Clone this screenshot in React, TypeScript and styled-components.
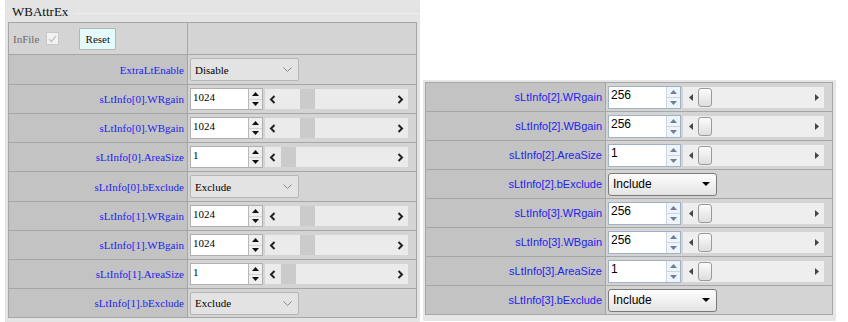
import styled, { createGlobalStyle } from 'styled-components'

const Global = createGlobalStyle`
  body {
    margin: 0;
    background: #ffffff;
  }
`

const Page = styled.div`
  display: flex;
  align-items: flex-start;
  width: 848px;
  height: 322px;
  overflow: hidden;
`

const LeftPanel = styled.div`
  margin-left: 5px;
  width: 415px;
  height: 322px;
  background: #e4e4e4;
  padding: 2px 0 0 3px;
  box-sizing: border-box;
`

const Title = styled.div`
  font-family: "Liberation Serif", serif;
  font-size: 13px;
  color: #111;
  height: 20px;
  line-height: 16px;
  padding-left: 4px;
  display: flex;
  align-items: center;
  gap: 6px;

  &::after {
    content: '';
    flex: 1;
    height: 1px;
    background: #eeeeee;
    margin-top: 2px;
  }
`

const Table = styled.div<{ $serif?: boolean; $width: number }>`
  width: ${p => p.$width}px;
  border: 1px solid #a6a6a6;
  border-bottom: none;
  font-family: ${p => (p.$serif ? '"Liberation Serif", serif' : '"Liberation Sans", Arial, sans-serif')};
  font-size: 11px;
`

const Row = styled.div<{ $h: number; $label: number }>`
  display: grid;
  grid-template-columns: ${p => p.$label}px 1fr;
  height: ${p => p.$h}px;
  border-bottom: 1px solid #a6a6a6;
`

const LabelCell = styled.div<{ $plain?: boolean }>`
  background: ${p => (p.$plain ? '#d4d4d4' : '#c3c3c3')};
  border-right: 1px solid #a6a6a6;
  color: #2222ee;
  display: flex;
  align-items: center;
  justify-content: ${p => (p.$plain ? 'flex-start' : 'flex-end')};
  padding: 0 3px 0 4px;
  box-sizing: border-box;
  white-space: nowrap;
`

const ValueCell = styled.div`
  background: #d4d4d4;
  display: flex;
  align-items: center;
  padding-left: 2px;
  padding-right: 8px;
  gap: 1px;
`

const InFileText = styled.span`
  color: #6a6a6a;
  margin-right: 7px;
`

const CheckBox = styled.span`
  width: 11px;
  height: 11px;
  border: 1px solid #c8c8c8;
  background: #f2f2f2;
  display: inline-flex;
  align-items: center;
  justify-content: center;
  margin-right: 20px;
`

const ResetButton = styled.button`
  font-family: "Liberation Serif", serif;
  font-size: 11px;
  color: #111;
  width: 37px;
  height: 22px;
  padding: 0;
  background: #e4fbfc;
  border: 1px solid #b4b4b4;
  border-radius: 1px;
`

const NumBox = styled.div<{ $win?: boolean }>`
  width: 73px;
  height: ${p => (p.$win ? 23 : 22)}px;
  box-sizing: border-box;
  background: #ffffff;
  border: 1px solid ${p => (p.$win ? '#9fb2c8' : '#b0b0b0')};
  display: flex;
  align-items: stretch;
  font-size: ${p => (p.$win ? 12 : 11)}px;
  color: #000;
`

const NumText = styled.span`
  flex: 1;
  padding: 1px 0 0 2px;
  line-height: 14px;
`

const Spinner = styled.div<{ $win?: boolean }>`
  width: 13px;
  display: flex;
  flex-direction: column;
  border-left: 1px solid ${p => (p.$win ? '#c9d6e4' : '#b8b8b8')};
  background: ${p => (p.$win ? '#f0f4f9' : '#efefef')};
`

const SpinHalf = styled.div<{ $win?: boolean }>`
  flex: 1;
  display: flex;
  align-items: center;
  justify-content: center;
  & + & {
    border-top: 1px solid ${p => (p.$win ? '#c9d6e4' : '#b8b8b8')};
  }
`

const Track = styled.div<{ $win?: boolean }>`
  flex: 1;
  height: ${p => (p.$win ? 21 : 20)}px;
  background: ${p => (p.$win ? '#eeeeee' : '#ebebeb')};
  display: flex;
  align-items: center;
  margin-left: 1px;
`

const ArrowBox = styled.div`
  width: 15px;
  display: flex;
  align-items: center;
  justify-content: center;
`

const Trough = styled.div`
  flex: 1;
  height: 100%;
  display: flex;
  align-items: center;
`

const Thumb = styled.div<{ $win?: boolean }>`
  width: ${p => (p.$win ? 14 : 15)}px;
  height: ${p => (p.$win ? 19 : 20)}px;
  box-sizing: border-box;
  background: ${p => (p.$win ? 'linear-gradient(#fbfbfb, #dedede)' : '#cbcbcb')};
  border: ${p => (p.$win ? '1px solid #9a9a9a' : 'none')};
  border-radius: ${p => (p.$win ? 3 : 0)}px;
`

const Select = styled.div<{ $win?: boolean }>`
  width: 109px;
  height: 23px;
  box-sizing: border-box;
  display: flex;
  align-items: center;
  justify-content: space-between;
  padding: 0 6px 0 4px;
  font-size: ${p => (p.$win ? 12 : 11)}px;
  color: #000;
  border: 1px solid ${p => (p.$win ? '#7a7a7a' : '#b6b6b6')};
  border-radius: ${p => (p.$win ? 3 : 2)}px;
  background: ${p => (p.$win ? 'linear-gradient(#fdfdfd, #e4e4e4)' : '#e3e3e3')};
`

const RightPanel = styled.div`
  margin-top: 80px;
  margin-left: 3px;
  width: 413px;
  height: 241px;
  background: #e6e6e6;
  padding: 2px 0 0 2px;
  box-sizing: border-box;
`

type Kind = 'num' | 'select'
interface Item {
  label: string
  kind: Kind
  value: string
  frac?: number
}

const leftRows: Item[] = [
  { label: 'ExtraLtEnable', kind: 'select', value: 'Disable' },
  { label: 'sLtInfo[0].WRgain', kind: 'num', value: '1024', frac: 0.2 },
  { label: 'sLtInfo[0].WBgain', kind: 'num', value: '1024', frac: 0.2 },
  { label: 'sLtInfo[0].AreaSize', kind: 'num', value: '1', frac: 0 },
  { label: 'sLtInfo[0].bExclude', kind: 'select', value: 'Exclude' },
  { label: 'sLtInfo[1].WRgain', kind: 'num', value: '1024', frac: 0.2 },
  { label: 'sLtInfo[1].WBgain', kind: 'num', value: '1024', frac: 0.2 },
  { label: 'sLtInfo[1].AreaSize', kind: 'num', value: '1', frac: 0 },
  { label: 'sLtInfo[1].bExclude', kind: 'select', value: 'Exclude' },
]

const rightRows: Item[] = [
  { label: 'sLtInfo[2].WRgain', kind: 'num', value: '256', frac: 0 },
  { label: 'sLtInfo[2].WBgain', kind: 'num', value: '256', frac: 0 },
  { label: 'sLtInfo[2].AreaSize', kind: 'num', value: '1', frac: 0 },
  { label: 'sLtInfo[2].bExclude', kind: 'select', value: 'Include' },
  { label: 'sLtInfo[3].WRgain', kind: 'num', value: '256', frac: 0 },
  { label: 'sLtInfo[3].WBgain', kind: 'num', value: '256', frac: 0 },
  { label: 'sLtInfo[3].AreaSize', kind: 'num', value: '1', frac: 0 },
  { label: 'sLtInfo[3].bExclude', kind: 'select', value: 'Include' },
]

function SpinArrows({ win }: { win?: boolean }) {
  const c = win ? '#6d7f96' : '#111'
  return (
    <Spinner $win={win}>
      <SpinHalf $win={win}>
        <svg width="7" height="4" viewBox="0 0 7 4"><path d="M0 4 L3.5 0 L7 4 Z" fill={c} /></svg>
      </SpinHalf>
      <SpinHalf $win={win}>
        <svg width="7" height="4" viewBox="0 0 7 4"><path d="M0 0 L3.5 4 L7 0 Z" fill={c} /></svg>
      </SpinHalf>
    </Spinner>
  )
}

function ScrollBar({ frac, win }: { frac: number; win?: boolean }) {
  const travel = win ? 100 : 97
  return (
    <Track $win={win}>
      <ArrowBox>
        {win ? (
          <svg width="4" height="7" viewBox="0 0 4 7"><path d="M4 0 L0 3.5 L4 7 Z" fill="#444" /></svg>
        ) : (
          <svg width="7" height="9" viewBox="0 0 7 9"><path d="M5.5 1 L2 4.5 L5.5 8" stroke="#222" strokeWidth="2" fill="none" /></svg>
        )}
      </ArrowBox>
      <Trough>
        <div style={{ width: Math.round(frac * travel) + (win ? 0 : 1) }} />
        <Thumb $win={win} />
        <div style={{ flex: 1 }} />
      </Trough>
      <ArrowBox>
        {win ? (
          <svg width="4" height="7" viewBox="0 0 4 7"><path d="M0 0 L4 3.5 L0 7 Z" fill="#444" /></svg>
        ) : (
          <svg width="7" height="9" viewBox="0 0 7 9"><path d="M1.5 1 L5 4.5 L1.5 8" stroke="#222" strokeWidth="2" fill="none" /></svg>
        )}
      </ArrowBox>
    </Track>
  )
}

function Field({ item, win }: { item: Item; win?: boolean }) {
  if (item.kind === 'select') {
    return (
      <Select $win={win}>
        <span>{item.value}</span>
        {win ? (
          <svg width="8" height="4" viewBox="0 0 8 4"><path d="M0 0 L8 0 L4 4 Z" fill="#000" /></svg>
        ) : (
          <svg width="9" height="5" viewBox="0 0 9 5"><path d="M0.5 0.5 L4.5 4.5 L8.5 0.5" stroke="#888" strokeWidth="1" fill="none" /></svg>
        )}
      </Select>
    )
  }
  return (
    <>
      <NumBox $win={win}>
        <NumText>{item.value}</NumText>
        <SpinArrows win={win} />
      </NumBox>
      <ScrollBar frac={item.frac ?? 0} win={win} />
    </>
  )
}

export default function App() {
  return (
    <>
      <Global />
      <Page>
        <LeftPanel>
          <Title>WBAttrEx</Title>
          <Table $serif $width={407}>
            <Row $h={31} $label={179}>
              <LabelCell $plain>
                <InFileText>InFile</InFileText>
                <CheckBox>
                  <svg width="9" height="8" viewBox="0 0 9 8"><path d="M1 4 L3.5 6.5 L8 1" stroke="#c4c4c4" strokeWidth="1.2" fill="none" /></svg>
                </CheckBox>
                <ResetButton>Reset</ResetButton>
              </LabelCell>
              <ValueCell />
            </Row>
            {leftRows.map((r, i) => (
              <Row key={r.label} $h={i === 0 || i === 4 ? 29 : 28} $label={179}>
                <LabelCell>{r.label}</LabelCell>
                <ValueCell>
                  <Field item={r} />
                </ValueCell>
              </Row>
            ))}
          </Table>
        </LeftPanel>
        <RightPanel>
          <Table $width={406}>
            {rightRows.map(r => (
              <Row key={r.label} $h={28} $label={180}>
                <LabelCell>{r.label}</LabelCell>
                <ValueCell>
                  <Field item={r} win />
                </ValueCell>
              </Row>
            ))}
          </Table>
        </RightPanel>
      </Page>
    </>
  )
}
